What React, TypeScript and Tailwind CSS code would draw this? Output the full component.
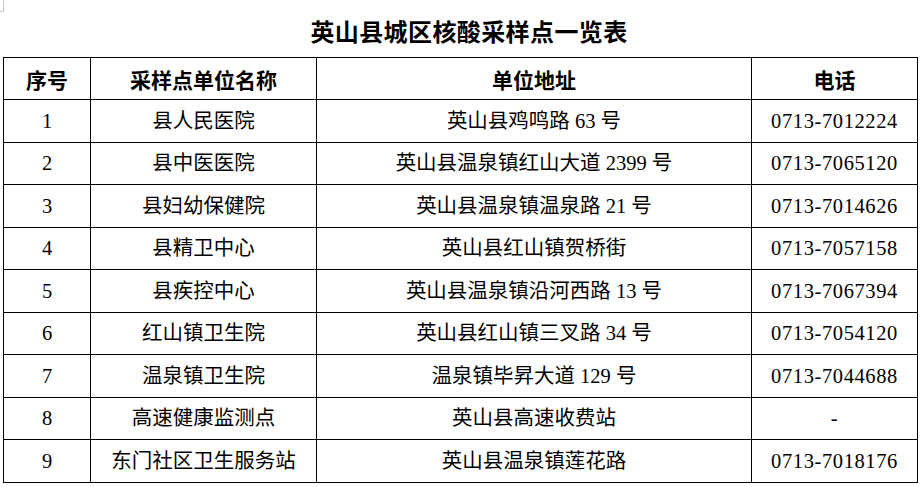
import React from "react";

const rows: [string, string, string, string][] = [
  ["1", "县人民医院", "英山县鸡鸣路 63 号", "0713-7012224"],
  ["2", "县中医医院", "英山县温泉镇红山大道 2399 号", "0713-7065120"],
  ["3", "县妇幼保健院", "英山县温泉镇温泉路 21 号", "0713-7014626"],
  ["4", "县精卫中心", "英山县红山镇贺桥街", "0713-7057158"],
  ["5", "县疾控中心", "英山县温泉镇沿河西路 13 号", "0713-7067394"],
  ["6", "红山镇卫生院", "英山县红山镇三叉路 34 号", "0713-7054120"],
  ["7", "温泉镇卫生院", "温泉镇毕昇大道 129 号", "0713-7044688"],
  ["8", "高速健康监测点", "英山县高速收费站", "-"],
  ["9", "东门社区卫生服务站", "英山县温泉镇莲花路", "0713-7018176"],
];

const bodyFont = { fontFamily: '"Liberation Serif", "Noto Sans CJK SC", serif' };
const headFont = { fontFamily: '"Noto Sans CJK SC", sans-serif' };

export default function App() {
  return (
    <div className="relative w-[922px] h-[487px] bg-white overflow-hidden">
      <div className="absolute left-0 top-0 w-[4px] h-[12px] border-r border-b border-[#c8c8c8]" />
      <div className="h-[57px] flex items-center justify-center pt-[5px] pl-[16px]">
        <h1
          className="text-[24px] leading-[24px] font-bold text-black tracking-[0.4px]"
          style={headFont}
        >
          英山县城区核酸采样点一览表
        </h1>
      </div>
      <table className="ml-[3px] w-[914px] border-collapse table-fixed text-black">
        <colgroup>
          <col className="w-[87px]" />
          <col className="w-[226px]" />
          <col className="w-[435px]" />
          <col className="w-[166px]" />
        </colgroup>
        <thead>
          <tr className="h-[42px]">
            {["序号", "采样点单位名称", "单位地址", "电话"].map((h) => (
              <th
                key={h}
                className="border border-black p-0 text-center text-[21px] leading-[24px] font-bold"
                style={headFont}
              >
                {h}
              </th>
            ))}
          </tr>
        </thead>
        <tbody>
          {rows.map((r) => (
            <tr key={r[0]} className="h-[42.5px]">
              {r.map((c, i) => (
                <td
                  key={i}
                  className={
                    i === 3
                      ? "border border-black p-0 text-center text-[20.5px] leading-[24px] font-normal tracking-[0.6px]"
                      : "border border-black p-0 text-center text-[20.5px] leading-[24px] font-normal"
                  }
                  style={bodyFont}
                >
                  {c}
                </td>
              ))}
            </tr>
          ))}
        </tbody>
      </table>
    </div>
  );
}
